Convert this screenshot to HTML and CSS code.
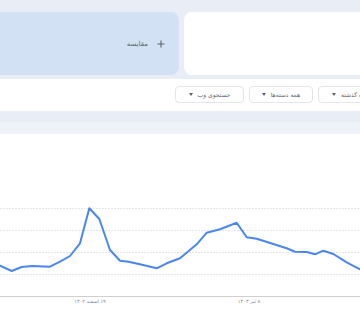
FILE: index.html
```html
<!DOCTYPE html>
<html lang="fa">
<head>
<meta charset="utf-8">
<link rel="stylesheet" href="styles.css">
</head>
<body>
<div class="page">
  <div class="top">
    <div class="card term"></div>
    <div class="card compare">
      <svg class="plus" width="8" height="8" viewBox="0 0 8 8"><path d="M4 0.5V7.5M0.5 4H7.5"/></svg>
      <span class="compare-label">مقایسه</span>
    </div>
  </div>
  <div class="filters">
    <div class="select s-time"><span>۱۲ ماه گذشته</span><i class="caret"></i></div>
    <div class="select s-cat"><span>همه دسته‌ها</span><i class="caret"></i></div>
    <div class="select s-web"><span>جستجوی وب</span><i class="caret"></i></div>
  </div>
  <div class="strip strip-a"></div>
  <div class="strip strip-b"></div>
  <div class="chart">
    <svg class="chart-svg" width="360" height="186" viewBox="0 134 360 186">
      <g class="grid">
        <line x1="0" y1="208.5" x2="360" y2="208.5"/>
        <line x1="0" y1="230.5" x2="360" y2="230.5"/>
        <line x1="0" y1="252.5" x2="360" y2="252.5"/>
        <line x1="0" y1="274.5" x2="360" y2="274.5"/>
      </g>
      <line class="axis" x1="0" y1="296.5" x2="360" y2="296.5"/>
      <polyline class="trend" points="-4,264 0,265.7 11.7,271 21.7,267 31.7,266 50,266.7 60,261.7 70,256 80,243.3 89.3,208.3 99.3,219 110,250 120,260.7 128.3,261.7 140,264.3 156.7,268.3 166.7,263.3 180,258.3 196.7,244.3 206.7,232.7 220,229.3 236.7,222.7 246.7,237.3 256.7,238.7 273.3,244 286.7,248.3 295,251.7 306.7,252 315,254.3 323.3,250.7 333.3,254 346.7,262.3 360,269.3 366,271"/>
      <text class="label" x="90" y="303">۱۹ اسفند ۱۴۰۲</text>
      <text class="label" x="249" y="303">۸ تیر ۱۴۰۳</text>
    </svg>
  </div>
</div>
</body>
</html>
```

FILE: styles.css
```css
html, body {
  margin: 0;
  padding: 0;
}
body {
  width: 360px;
  height: 320px;
  overflow: hidden;
  background: #ffffff;
  font-family: "DejaVu Sans", sans-serif;
}
.page {
  width: 360px;
  height: 320px;
  overflow: hidden;
  display: flex;
  flex-direction: column;
}
.top {
  background: #e9edf6;
  height: 79px;
  box-sizing: border-box;
  padding: 12px 0 4px;
  display: flex;
  direction: rtl;
  gap: 5px;
  flex-shrink: 0;
}
.card {
  flex: 0 0 200px;
  border-radius: 8px;
  height: 63px;
}
.term {
  background: #ffffff;
  margin-right: -24px;
}
.compare {
  background: #d3e1f4;
  display: flex;
  align-items: center;
  padding-right: 14px;
  gap: 9px;
  box-sizing: border-box;
}
.plus {
  display: block;
  flex-shrink: 0;
}
.plus path {
  stroke: #5f6368;
  stroke-width: 1.1;
  fill: none;
}
.compare-label {
  color: #5f6368;
  font-size: 7px;
}
.filters {
  height: 32px;
  background: #ffffff;
  display: flex;
  direction: rtl;
  gap: 5px;
  padding-top: 7px;
  box-sizing: border-box;
  flex-shrink: 0;
}
.select {
  height: 17px;
  box-sizing: border-box;
  border: 1px solid #e3e5e8;
  border-radius: 4px;
  display: flex;
  align-items: center;
  justify-content: center;
  gap: 5px;
  font-size: 6px;
  color: #5f6368;
  white-space: nowrap;
  overflow: hidden;
}
.s-time {
  flex: 0 0 72px;
  margin-right: -30px;
  justify-content: flex-end;
  padding-left: 13px;
}
.s-cat {
  flex: 0 0 64px;
}
.s-web {
  flex: 0 0 69px;
}
.caret {
  flex-shrink: 0;
  width: 0;
  height: 0;
  border-left: 2.5px solid transparent;
  border-right: 2.5px solid transparent;
  border-top: 3px solid #5f6368;
}
.strip {
  flex-shrink: 0;
}
.strip-a {
  height: 11px;
  background: #e8edf6;
}
.strip-b {
  height: 12px;
  background: #eff2f9;
}
.chart {
  flex: 1;
  background: #ffffff;
}
.chart-svg {
  display: block;
}
.grid line {
  stroke: #e6e6e6;
  stroke-width: 1;
  stroke-dasharray: 2 1;
}
.axis {
  stroke: #d0d0d0;
  stroke-width: 1;
}
.trend {
  fill: none;
  stroke: #4a86f0;
  stroke-width: 2;
  stroke-linejoin: round;
}
.label {
  font-family: "DejaVu Sans", sans-serif;
  font-size: 5px;
  fill: #80868b;
  text-anchor: middle;
  direction: rtl;
}
```
